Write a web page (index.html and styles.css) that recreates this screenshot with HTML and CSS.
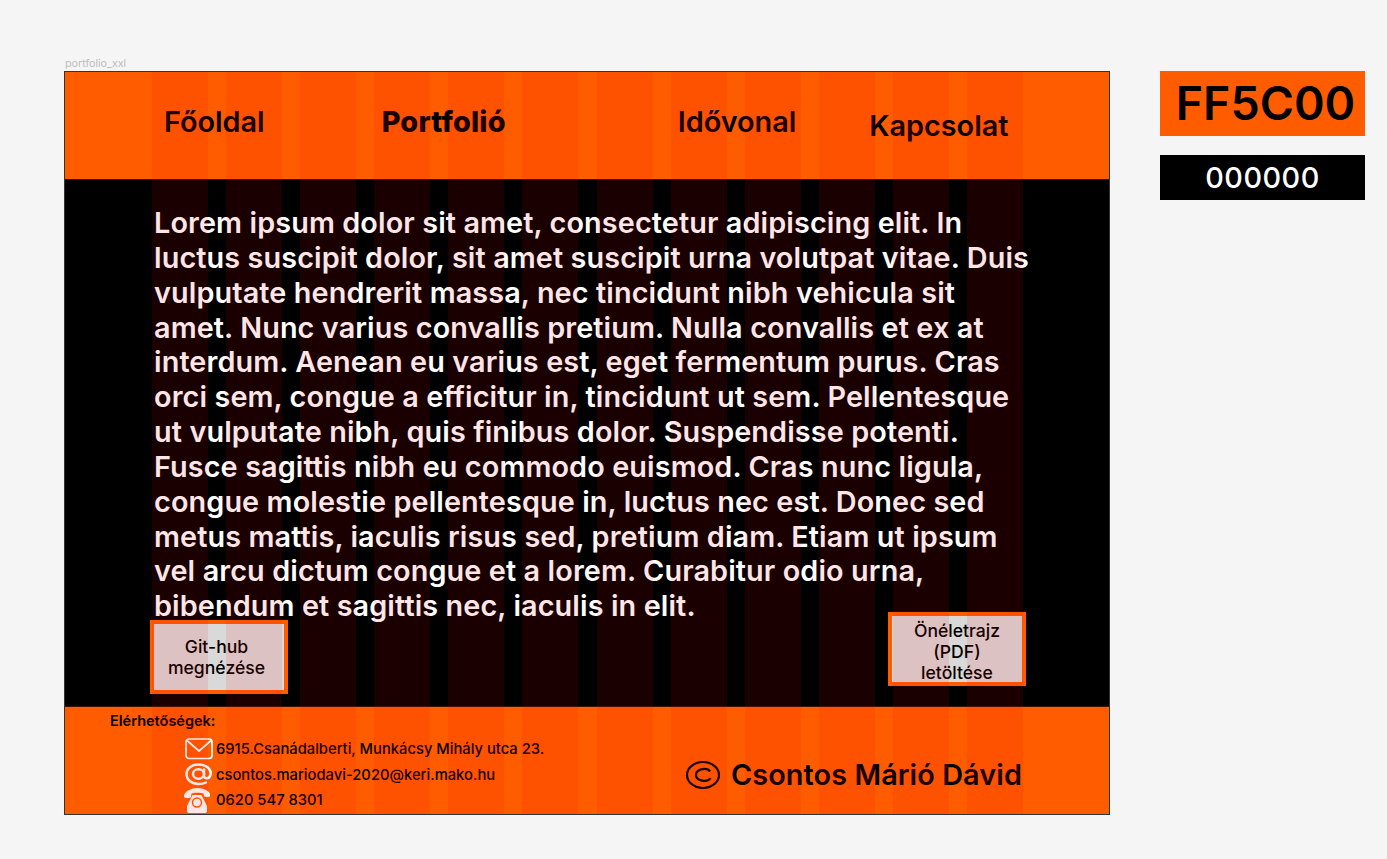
FILE: index.html
```html
<!DOCTYPE html>
<html lang="en">
<head>
    <meta charset="UTF-8">
    <title>portfolio_xxl</title>
    <link rel="stylesheet" href="styles.css">
</head>
<body>
    <div class="board">
        <div class="frameLabel">portfolio_xxl</div>
        <div class="frame">
            <header class="topBar">
                <a class="navItem navHome">Főoldal</a>
                <a class="navItem navPortfolio">Portfolió</a>
                <a class="navItem navTimeline">Idővonal</a>
                <a class="navItem navContact">Kapcsolat</a>
            </header>

            <main class="content">
                <p class="lorem">Lorem ipsum dolor sit amet, consectetur adipiscing elit. In luctus suscipit dolor, sit amet suscipit urna volutpat vitae. Duis vulputate hendrerit massa, nec tincidunt nibh vehicula sit amet. Nunc varius convallis pretium. Nulla convallis et ex at interdum. Aenean eu varius est, eget fermentum purus. Cras orci sem, congue a efficitur in, tincidunt ut sem. Pellentesque ut vulputate nibh, quis finibus dolor. Suspendisse potenti. Fusce sagittis nibh eu commodo euismod. Cras nunc ligula, congue molestie pellentesque in, luctus nec est. Donec sed metus mattis, iaculis risus sed, pretium diam. Etiam ut ipsum vel arcu dictum congue et a lorem. Curabitur odio urna, bibendum et sagittis nec, iaculis in elit.</p>
                <div class="actions">
                    <a class="actionBtn btnGit">Git-hub megnézése</a>
                    <a class="actionBtn btnCv">Önéletrajz (PDF) letöltése</a>
                </div>
            </main>

            <footer class="bottomBar">
                <div class="contact">
                    <div class="contactTitle">Elérhetőségek:</div>
                    <div class="contactRow rowMail">
                        <svg class="contactIcon" viewBox="0 0 28 22" width="28" height="22" fill="none" stroke="#fff" stroke-width="1.7" stroke-linejoin="round">
                            <rect x="1" y="1" width="26" height="19.5" rx="3"/>
                            <path d="M2 2.5 L14 13 L26 2.5"/>
                        </svg>
                        <span>6915.Csanádalberti, Munkácsy Mihály utca 23.</span>
                    </div>
                    <div class="contactRow rowAt">
                        <svg class="contactIcon" viewBox="0 0 28 24" width="28" height="24" fill="none" stroke="#fff" stroke-width="2.5" stroke-linecap="round">
                            <ellipse cx="13.500" cy="11" rx="5.500" ry="4.700"/>
                            <path d="M19 6.500 V12.500 C19 16.500 24 16 25.300 12.500 C27 6.500 21.500 1.500 13.500 1.500 C6.500 1.500 1.500 5.500 1.500 11 C1.500 17 7 21 13.500 21 C16.500 21 19 20.500 21 19.500"/>
                        </svg>
                        <span>csontos.mariodavi-2020@keri.mako.hu</span>
                    </div>
                    <div class="contactRow rowPhone">
                        <svg class="contactIcon phoneIcon" viewBox="0 0 28 26" width="28" height="26">
                            <path fill="#fff" d="M-1 10 C-2 5.500 5 1 12.500 1 C20 1 26 5 25 9 C24.500 10.500 19.500 10.500 19 9 L18.500 6.500 C15.500 5.500 9.500 5.500 6.500 6.500 L6 10 C5.500 11.500 -0.500 11.500 -1 10 Z"/>
                            <path fill="#fff" d="M7.500 8 H16.500 L22 19 V24 C22 25.500 21 26 20 26 H4 C3 26 2 25.500 2 24 V19 Z"/>
                            <circle cx="12" cy="15.500" r="4.500" fill="none" stroke="#ff5c00" stroke-width="1.400"/>
                        </svg>
                        <span>0620 547 8301</span>
                    </div>
                </div>
                <div class="copyright">
                    <svg viewBox="0 0 34 28" width="34" height="28" fill="none" stroke="#000" stroke-width="2.2">
                        <ellipse cx="17" cy="14" rx="16" ry="13"/>
                        <path d="M24 10.500 C22 7 11 6.500 10 13.500 C9.500 20.500 22 21.500 24.500 17"/>
                    </svg>
                    <span>Csontos Márió Dávid</span>
                </div>
            </footer>

            <div class="gridOverlay">
                <i></i><i></i><i></i><i></i><i></i><i></i><i></i><i></i><i></i><i></i><i></i><i></i>
            </div>
        </div>
    </div>

    <aside class="swatches">
        <div class="swatch swatchOrange">FF5C00</div>
        <div class="swatch swatchBlack">000000</div>
    </aside>
</body>
</html>
```

FILE: styles.css
```css
body {
    margin: 0;
    height: 859px;
    overflow: hidden;
    background-color: #f5f5f5;
    font-family: 'Inter', sans-serif;
    color: #000;
    display: flex;
    align-items: flex-start;
    padding: 57px 0 0 64px;
    box-sizing: border-box;
}

.frameLabel {
    height: 14px;
    font-size: 10.7px;
    line-height: 13px;
    padding-left: 1px;
    color: #bdbdbd;
}

.frame {
    position: relative;
    width: 1046px;
    height: 744px;
    box-sizing: border-box;
    border: 1px solid #333;
    display: flex;
    flex-direction: column;
    background-color: #000;
}

/* red layout columns sit over everything in the frame */
.gridOverlay {
    position: absolute;
    top: 0;
    bottom: 0;
    left: 87px;
    width: 871px;
    display: grid;
    grid-template-columns: repeat(12, 56px);
    column-gap: 18.1px;
    pointer-events: none;
}

.gridOverlay i {
    background-color: rgba(255, 0, 0, 0.1);
}

.topBar {
    height: 108px;
    flex: none;
    box-sizing: border-box;
    background-color: #ff5c00;
    border-bottom: 1px solid #3a1500;
    display: flex;
    align-items: flex-start;
    padding-left: 99px;
}

.navItem {
    font-size: 28.8px;
    line-height: 35px;
    font-weight: 600;
    margin-top: 32px;
}

.navPortfolio {
    font-weight: 800;
    letter-spacing: 0.2px;
    margin-left: 117px;
}

.navTimeline {
    margin-left: 172px;
}

.navContact {
    margin-left: 73px;
    margin-top: 36px;
}

.content {
    flex: 1;
    min-height: 0;
    padding-left: 89px;
}

.lorem {
    margin: 26px 0 0;
    width: 880px;
    font-size: 28.8px;
    line-height: 34.85px;
    font-weight: 600;
    letter-spacing: 0.11px;
    color: #fff;
}

.actions {
    display: flex;
    align-items: flex-start;
    width: 876px;
    justify-content: space-between;
    margin: -12px 0 0 -4px;
}

.actionBtn {
    width: 138px;
    height: 74px;
    box-sizing: border-box;
    background-color: #d9d9d9;
    border: 4px solid #ff5c00;
    font-size: 17.6px;
    line-height: 21px;
    font-weight: 500;
    text-align: center;
    display: flex;
    align-items: center;
    justify-content: center;
}

.btnGit {
    margin-top: 8px;
    padding: 0 13px 0 8px;
}

.btnCv {
    padding: 5px 20px 0;
}

.bottomBar {
    height: 108px;
    flex: none;
    box-sizing: border-box;
    background-color: #ff5c00;
    border-top: 1px solid #3a1500;
    display: flex;
    align-items: flex-start;
    position: relative;
}

.contact {
    width: 621px;
    padding: 5px 0 0 45px;
    box-sizing: border-box;
}

.contactTitle {
    font-size: 14.5px;
    line-height: 17px;
    font-weight: 600;
}

.contactRow {
    display: flex;
    align-items: center;
    margin-left: 75px;
    font-size: 14.75px;
    line-height: 18px;
    font-weight: 500;
}

.contactRow span {
    margin-left: 3px;
}

.contactIcon {
    flex: none;
}

.phoneIcon {
    overflow: visible;
}

.rowMail {
    margin-top: 8px;
    height: 24px;
}

.rowAt {
    height: 26px;
    margin-top: 1px;
}

.rowPhone {
    height: 26px;
    margin-top: -1px;
}

.copyright {
    display: flex;
    align-items: center;
    margin-top: 50px;
    font-size: 28.8px;
    line-height: 35px;
    font-weight: 600;
    letter-spacing: 0.1px;
}

.copyright svg {
    margin-right: 11px;
}

.swatches {
    margin: 14px 0 0 50px;
    width: 205px;
}

.swatch {
    text-align: center;
    font-weight: 500;
}

.swatchOrange {
    height: 65px;
    line-height: 65px;
    font-size: 46.5px;
    font-weight: 600;
    padding-left: 6px;
    box-sizing: border-box;
    background-color: #ff5c00;
}

.swatchBlack {
    margin-top: 19px;
    height: 45px;
    line-height: 46px;
    font-size: 28.8px;
    font-weight: 500;
    letter-spacing: 0.5px;
    color: #fff;
    background-color: #000;
}
```
